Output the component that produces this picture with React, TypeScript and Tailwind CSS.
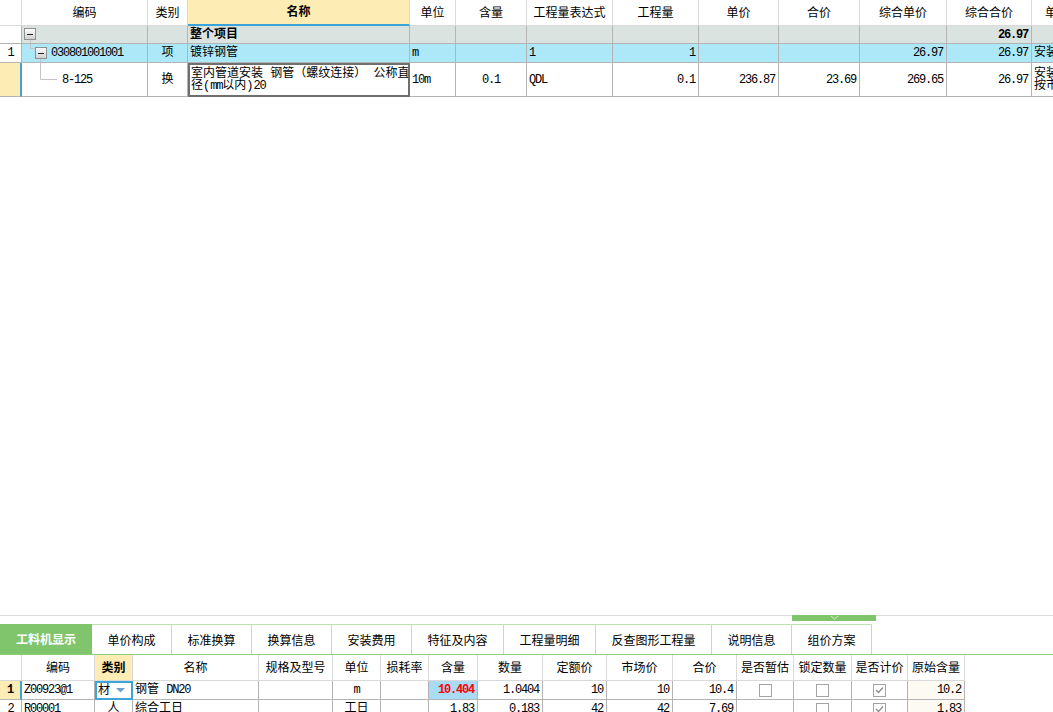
import type { ReactNode } from "react";
import { twMerge } from "tailwind-merge";

const TOP_COLS = "grid-cols-[22px_126px_40px_222px_46px_71px_86px_86px_80px_81px_87px_85px_1fr]";
const BOT_COLS = "grid-cols-[22px_73px_38px_126px_74px_48px_48px_49px_65px_64px_66px_64px_57px_58px_56px_57px]";

function C({ className = "", children }: { className?: string; children?: ReactNode }) {
  return (
    <div className={twMerge("flex items-center overflow-hidden whitespace-nowrap border-r border-b border-[#b4b4b4] px-[2px]", className)}>
      {children}
    </div>
  );
}

// header cell
function H({ className = "", children }: { className?: string; children?: ReactNode }) {
  return <C className={twMerge("justify-center border-[#d9d9d9] pt-[2px]", className)}>{children}</C>;
}

// latin / digits, squeezed to half-width like the grid font
function N({ children, className = "" }: { children: ReactNode; className?: string }) {
  return <span className={twMerge("tracking-[-1.2px]", className)}>{children}</span>;
}

function Box({ checked }: { checked?: boolean }) {
  return (
    <span className="flex h-[13px] w-[13px] items-center justify-center border border-[#a3a3a3] bg-white">
      {checked && (
        <svg width="9" height="8" viewBox="0 0 9 8">
          <path d="M1 4l2.5 2.5L8 1.5" fill="none" stroke="#8c8c8c" strokeWidth="1.3" />
        </svg>
      )}
    </span>
  );
}

function MinusBox({ x, y }: { x: number; y: number }) {
  return (
    <g>
      <defs>
        <linearGradient id="mb" x1="0" y1="0" x2="0" y2="1">
          <stop offset="0" stopColor="#ffffff" />
          <stop offset="1" stopColor="#cfcfcf" />
        </linearGradient>
      </defs>
      <rect x={x + 0.5} y={y + 0.5} width="11" height="11" fill="url(#mb)" stroke="#8f8f8f" />
      <line x1={x + 3} y1={y + 6.5} x2={x + 9} y2={y + 6.5} stroke="#222" />
    </g>
  );
}

const tabs = ["单价构成", "标准换算", "换算信息", "安装费用", "特征及内容", "工程量明细", "反查图形工程量", "说明信息", "组价方案"];
const tabW = ["w-[80px]", "w-[80px]", "w-[80px]", "w-[80px]", "w-[92px]", "w-[92px]", "w-[116px]", "w-[80px]", "w-[80px]"];

export default function App() {
  return (
    <div className="flex h-[712px] w-[1053px] flex-col overflow-hidden bg-white font-['Liberation_Mono','Noto_Sans_CJK_SC',monospace] text-[12px] leading-[14px] text-black">
      {/* upper grid */}
      <div className="shrink-0">
        <div className={`grid h-[26px] ${TOP_COLS}`}>
          <H />
          <H>编码</H>
          <H>类别</H>
          <H className="border-b-2 border-b-[#3aa3d8] bg-[#fdecb3] font-bold">名称</H>
          <H>单位</H>
          <H>含量</H>
          <H>工程量表达式</H>
          <H>工程量</H>
          <H>单价</H>
          <H>合价</H>
          <H>综合单价</H>
          <H>综合合价</H>
          <H className="justify-start border-r-0 pl-[13px]">单价构成</H>
        </div>

        <div className={`grid h-[18px] ${TOP_COLS}`}>
          <C className="bg-white" />
          <C className="bg-[#dae3df] px-0">
            <svg width="20" height="17" className="shrink-0">
              <MinusBox x={2} y={2} />
              <line x1="8.5" y1="14" x2="8.5" y2="17" stroke="#c4c4c4" />
            </svg>
          </C>
          <C className="bg-[#dae3df]" />
          <C className="bg-[#dae3df] font-bold">整个项目</C>
          <C className="bg-[#dae3df]" />
          <C className="bg-[#dae3df]" />
          <C className="bg-[#dae3df]" />
          <C className="bg-[#dae3df]" />
          <C className="bg-[#dae3df]" />
          <C className="bg-[#dae3df]" />
          <C className="bg-[#dae3df]" />
          <C className="justify-end bg-[#dae3df] pr-[3px] font-bold"><N>26.97</N></C>
          <C className="border-r-0 bg-[#dae3df]" />
        </div>

        <div className={`grid h-[19px] ${TOP_COLS}`}>
          <C className="justify-center bg-white"><N>1</N></C>
          <C className="bg-[#ade8f9] px-0">
            <svg width="29" height="18" className="shrink-0">
              <polyline points="8.5,0 8.5,4.5 13,4.5" fill="none" stroke="#c4c4c4" />
              <MinusBox x={13} y={3} />
              <line x1="18.5" y1="15" x2="18.5" y2="18" stroke="#c4c4c4" />
            </svg>
            <N>030801001001</N>
          </C>
          <C className="justify-center bg-[#ade8f9]">项</C>
          <C className="bg-[#ade8f9]">镀锌钢管</C>
          <C className="bg-[#ade8f9]"><N>m</N></C>
          <C className="bg-[#ade8f9]" />
          <C className="bg-[#ade8f9]"><N>1</N></C>
          <C className="justify-end bg-[#ade8f9] pr-[3px]"><N>1</N></C>
          <C className="bg-[#ade8f9]" />
          <C className="bg-[#ade8f9]" />
          <C className="justify-end bg-[#ade8f9] pr-[3px]"><N>26.97</N></C>
          <C className="justify-end bg-[#ade8f9] pr-[3px]"><N>26.97</N></C>
          <C className="border-r-0 bg-[#ade8f9]">安装工程</C>
        </div>

        <div className={`grid h-[34px] ${TOP_COLS}`}>
          <C className="border-r-2 border-r-[#3aa3d8] bg-[#fdecb3]" />
          <C className="px-0">
            <svg width="36" height="33" className="shrink-0">
              <polyline points="18.5,0 18.5,16.5 35,16.5" fill="none" stroke="#c4c4c4" />
            </svg>
            <span className="pl-[4px]"><N>8-125</N></span>
          </C>
          <C className="justify-center">换</C>
          <C className="border-2 border-[#6f6f6f] px-[1px] leading-[12px]">
            <span>
              室内管道安装 钢管（螺纹连接） 公称直
              <br />
              径(<N>mm</N>以内)<N>20</N>
            </span>
          </C>
          <C><N>10m</N></C>
          <C className="justify-center"><N>0.1</N></C>
          <C><N>QDL</N></C>
          <C className="justify-end pr-[3px]"><N>0.1</N></C>
          <C className="justify-end pr-[3px]"><N>236.87</N></C>
          <C className="justify-end pr-[3px]"><N>23.69</N></C>
          <C className="justify-end pr-[3px]"><N>269.65</N></C>
          <C className="justify-end pr-[3px]"><N>26.97</N></C>
          <C className="border-r-0 leading-[12px]">
            <span>安装工程<br />按市场价</span>
          </C>
        </div>
      </div>

      <div className="min-h-0 flex-1" />

      {/* lower panel */}
      <div className="flex h-[97px] shrink-0 flex-col overflow-hidden">
        <div className="flex h-[6px] shrink-0">
          <div className="flex-1 border-t border-[#dcdcdc]" />
          <div className="flex w-[84px] justify-center bg-[#80c46c]">
            <svg width="9" height="6" viewBox="0 0 9 6">
              <polyline points="1,1 4.5,4 8,1" fill="none" stroke="#d6efcc" strokeWidth="1" />
            </svg>
          </div>
          <div className="w-[177px] border-t border-[#dcdcdc]" />
        </div>
        <div className="h-[3px] shrink-0" />

        <div className="flex h-[31px] shrink-0 border-b border-[#8fcd7b] font-['Noto_Sans_CJK_SC',sans-serif]">
          <div className="flex w-[92px] items-center justify-center bg-[#80c46c] font-bold text-white">工料机显示</div>
          {tabs.map((t, i) => (
            <div key={t} className={`flex ${tabW[i]} items-center justify-center border-t border-r border-[#bde2ad]`}>
              {t}
            </div>
          ))}
        </div>

        <div className={`grid h-[26px] shrink-0 ${BOT_COLS}`}>
          <H />
          <H>编码</H>
          <H className="bg-[#fdecb3] font-bold">类别</H>
          <H>名称</H>
          <H>规格及型号</H>
          <H>单位</H>
          <H>损耗率</H>
          <H>含量</H>
          <H>数量</H>
          <H>定额价</H>
          <H>市场价</H>
          <H>合价</H>
          <H>是否暂估</H>
          <H>锁定数量</H>
          <H>是否计价</H>
          <H>原始含量</H>
        </div>

        <div className={`grid h-[19px] shrink-0 ${BOT_COLS}`}>
          <C className="justify-center border-r-2 border-r-[#3aa3d8] bg-[#fdecb3] font-bold"><N>1</N></C>
          <C><N>Z00923@1</N></C>
          <C className="justify-between border-2 border-[#3ea4d8] px-[1px]">
            <span>材</span>
            <svg width="9" height="5" viewBox="0 0 9 5" className="mr-[5px]">
              <polygon points="0,0 9,0 4.5,4.5" fill="#6f9fd2" />
            </svg>
          </C>
          <C>
            <span className="whitespace-pre">钢管 <N>DN20</N></span>
          </C>
          <C />
          <C className="justify-center"><N>m</N></C>
          <C />
          <C className="justify-end bg-[#a9dbf6] pr-[3px] font-bold text-[#ff0000]"><N>10.404</N></C>
          <C className="justify-end pr-[3px]"><N>1.0404</N></C>
          <C className="justify-end pr-[3px]"><N>10</N></C>
          <C className="justify-end pr-[3px]"><N>10</N></C>
          <C className="justify-end pr-[3px]"><N>10.4</N></C>
          <C className="justify-center"><Box /></C>
          <C className="justify-center"><Box /></C>
          <C className="justify-center"><Box checked /></C>
          <C className="justify-end bg-[#fdf9f3] pr-[3px]"><N>10.2</N></C>
        </div>

        <div className={`grid h-[19px] shrink-0 ${BOT_COLS}`}>
          <C className="justify-center"><N>2</N></C>
          <C><N>R00001</N></C>
          <C className="justify-center">人</C>
          <C>综合工日</C>
          <C />
          <C className="justify-center">工日</C>
          <C />
          <C className="justify-end pr-[3px]"><N>1.83</N></C>
          <C className="justify-end pr-[3px]"><N>0.183</N></C>
          <C className="justify-end pr-[3px]"><N>42</N></C>
          <C className="justify-end pr-[3px]"><N>42</N></C>
          <C className="justify-end pr-[3px]"><N>7.69</N></C>
          <C />
          <C className="justify-center"><Box /></C>
          <C className="justify-center"><Box checked /></C>
          <C className="justify-end bg-[#fdf9f3] pr-[3px]"><N>1.83</N></C>
        </div>
      </div>
    </div>
  );
}
